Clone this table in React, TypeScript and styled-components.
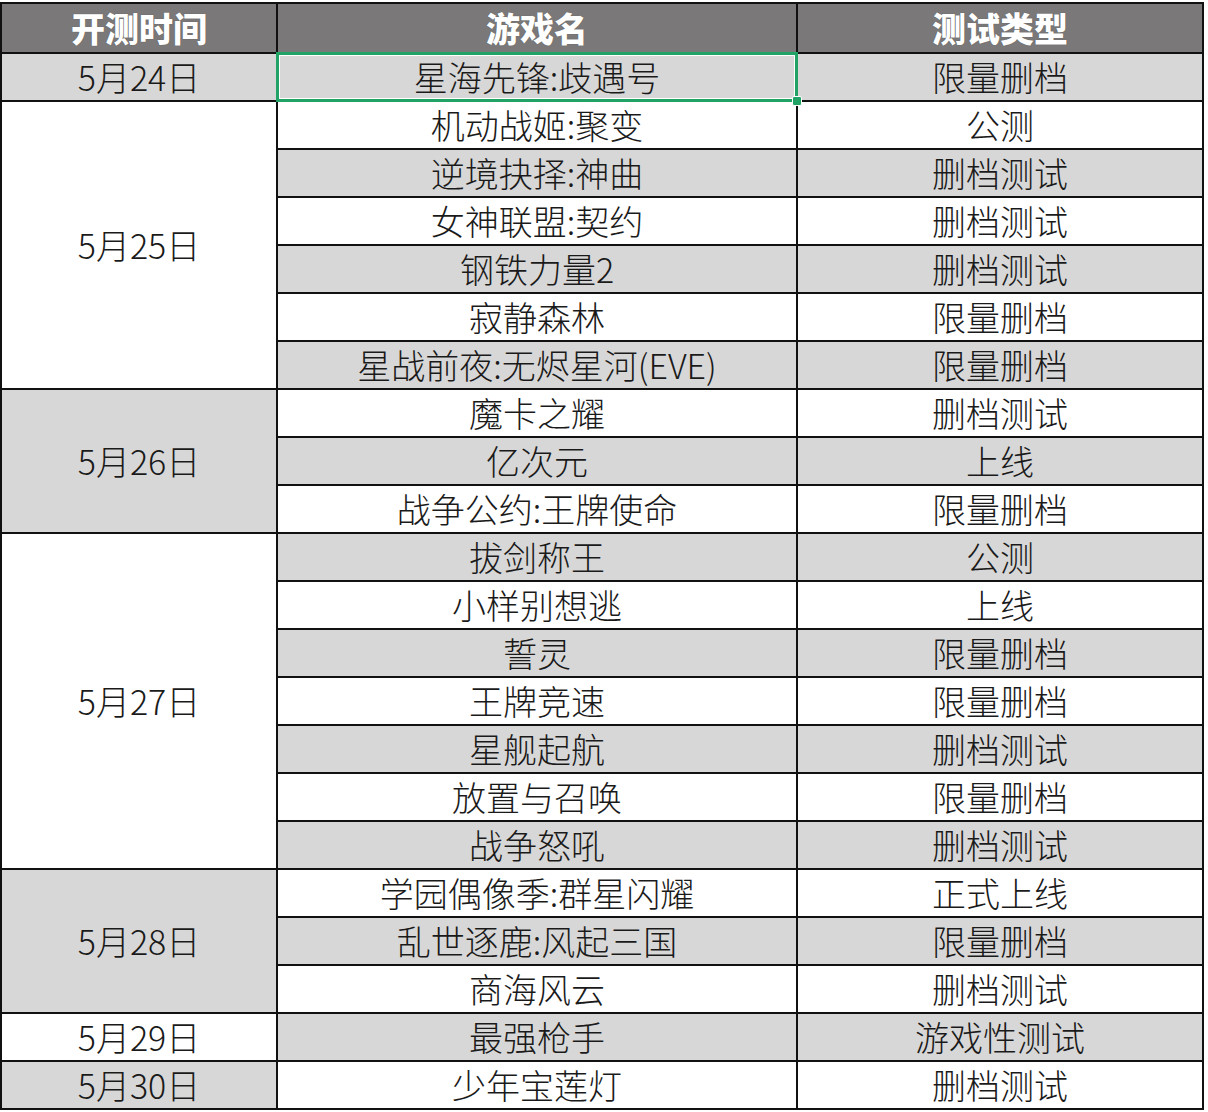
import React from "react";
import styled, { createGlobalStyle } from "styled-components";

const GlobalStyle = createGlobalStyle`
  html, body {
    margin: 0;
    padding: 0;
    background: #ffffff;
  }
  body {
    font-family: "Noto Sans CJK SC", "Noto Sans", sans-serif;
  }
`;

type Row = { game: string; kind: string };
type Group = { date: string; rows: Row[] };

const groups: Group[] = [
  { date: "5月24日", rows: [{ game: "星海先锋:歧遇号", kind: "限量删档" }] },
  {
    date: "5月25日",
    rows: [
      { game: "机动战姬:聚变", kind: "公测" },
      { game: "逆境抉择:神曲", kind: "删档测试" },
      { game: "女神联盟:契约", kind: "删档测试" },
      { game: "钢铁力量2", kind: "删档测试" },
      { game: "寂静森林", kind: "限量删档" },
      { game: "星战前夜:无烬星河(EVE)", kind: "限量删档" },
    ],
  },
  {
    date: "5月26日",
    rows: [
      { game: "魔卡之耀", kind: "删档测试" },
      { game: "亿次元", kind: "上线" },
      { game: "战争公约:王牌使命", kind: "限量删档" },
    ],
  },
  {
    date: "5月27日",
    rows: [
      { game: "拔剑称王", kind: "公测" },
      { game: "小样别想逃", kind: "上线" },
      { game: "誓灵", kind: "限量删档" },
      { game: "王牌竞速", kind: "限量删档" },
      { game: "星舰起航", kind: "删档测试" },
      { game: "放置与召唤", kind: "限量删档" },
      { game: "战争怒吼", kind: "删档测试" },
    ],
  },
  {
    date: "5月28日",
    rows: [
      { game: "学园偶像季:群星闪耀", kind: "正式上线" },
      { game: "乱世逐鹿:风起三国", kind: "限量删档" },
      { game: "商海风云", kind: "删档测试" },
    ],
  },
  { date: "5月29日", rows: [{ game: "最强枪手", kind: "游戏性测试" }] },
  { date: "5月30日", rows: [{ game: "少年宝莲灯", kind: "删档测试" }] },
];

const Page = styled.div`
  padding: 2px 0 0 0;
  width: 1208px;
`;

const Sheet = styled.table`
  border-collapse: collapse;
  width: 1204px;
  table-layout: fixed;
  border: 2px solid #111;
`;

const HeadCell = styled.th`
  height: 48px;
  padding: 0;
  background: #7a7878;
  color: #ffffff;
  font-size: 34px;
  font-weight: 900;
  line-height: 1;
  text-align: center;
  border: 2px solid #111;
  text-shadow: 0 0 1px rgba(0, 0, 0, 0.35);
`;

const Cell = styled.td<{ $shade: boolean }>`
  height: 46px;
  padding: 0;
  background: ${({ $shade }) => ($shade ? "#d8d7d7" : "#ffffff")};
  color: #1a1a1a;
  font-size: 34px;
  font-weight: 300;
  line-height: 1;
  text-align: center;
  border: 2px solid #111;
  white-space: nowrap;
`;

const Selected = styled.div`
  position: relative;
  height: 46px;
  display: flex;
  align-items: center;
  justify-content: center;
  &::before {
    content: "";
    position: absolute;
    inset: -2px;
    border: 3px solid #21a366;
    box-shadow: inset 0 0 0 1px #ffffff;
    pointer-events: none;
  }
`;

const Handle = styled.span`
  position: absolute;
  right: -6px;
  bottom: -6px;
  width: 8px;
  height: 8px;
  border-radius: 2px;
  background: #21a366;
  border: 1px solid #ffffff;
`;

export default function App() {
  let index = 0;
  return (
    <Page>
      <GlobalStyle />
      <Sheet>
        <colgroup>
          <col style={{ width: 276 }} />
          <col style={{ width: 520 }} />
          <col />
        </colgroup>
        <thead>
          <tr>
            <HeadCell>开测时间</HeadCell>
            <HeadCell>游戏名</HeadCell>
            <HeadCell>测试类型</HeadCell>
          </tr>
        </thead>
        <tbody>
          {groups.map((g, gi) =>
            g.rows.map((r, ri) => {
              const shade = index % 2 === 0;
              const first = index === 0;
              index += 1;
              return (
                <tr key={`${gi}-${ri}`}>
                  {ri === 0 && (
                    <Cell $shade={gi % 2 === 0} rowSpan={g.rows.length}>
                      {g.date}
                    </Cell>
                  )}
                  <Cell $shade={shade}>
                    {first ? (
                      <Selected>
                        {r.game}
                        <Handle />
                      </Selected>
                    ) : (
                      r.game
                    )}
                  </Cell>
                  <Cell $shade={shade}>{r.kind}</Cell>
                </tr>
              );
            })
          )}
        </tbody>
      </Sheet>
    </Page>
  );
}
